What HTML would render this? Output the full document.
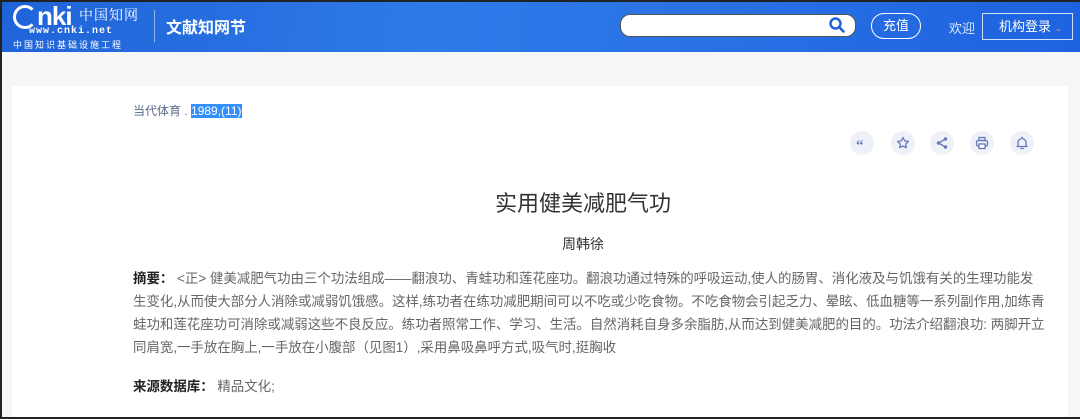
<!DOCTYPE html>
<html><head><meta charset="utf-8">
<style>
*{margin:0;padding:0;box-sizing:border-box}
html,body{width:1080px;height:419px;overflow:hidden}
body{background:#f5f6f8;font-family:"Liberation Sans","Noto Sans CJK SC",sans-serif;position:relative}
div{white-space:nowrap}
.hdr{position:absolute;left:0;top:0;width:1080px;height:52px;background:linear-gradient(100deg,#1f63d8 0%,#2e7ae8 40%,#2a74e6 60%,#1e62df 100%)}
.logo{position:absolute;left:13px;top:4px;color:#fff;width:130px;height:44px}
.card{position:absolute;left:12px;top:86px;width:1056px;height:340px;background:#fff}
.ic{position:absolute;top:131px;width:24px;height:24px;border-radius:50%;background:#eef1f8}
.ic svg{position:absolute;left:5px;top:5px}
.p{position:absolute;left:133px;font-size:13.45px;color:#666;line-height:23px}
b{color:#222}
</style></head><body>
<div class="hdr">
 <div class="logo">
  <div style="position:absolute;left:0;top:1px;width:24px;height:24px;border-radius:50%;border:3px solid #fff;border-right-color:transparent"></div>
  <div style="position:absolute;left:24px;top:-3px;font:bold 26px 'Liberation Sans';letter-spacing:-1px">nki</div>
  <div style="position:absolute;left:66px;top:1px;font-size:14px;font-family:'Noto Serif CJK SC',serif;letter-spacing:1px">中国知网</div>
  <div style="position:absolute;left:16px;top:22px;font:bold 10px 'Liberation Mono';letter-spacing:1px">www.cnki.net</div>
  <div style="position:absolute;left:0;top:34px;font-size:9px;letter-spacing:2px">中国知识基础设施工程</div>
 </div>
 <div style="position:absolute;left:154px;top:10px;width:1px;height:32px;background:rgba(255,255,255,.5)"></div>
 <div style="position:absolute;left:166px;top:14px;font-size:16px;font-weight:bold;color:#fff">文献知网节</div>
 <div style="position:absolute;left:620px;top:14px;width:236px;height:23px;border-radius:10px;background:#fff;border:1px solid #555"></div>
 <svg style="position:absolute;left:828px;top:16px" width="18" height="18" viewBox="0 0 18 18"><circle cx="7.5" cy="7.5" r="5" fill="none" stroke="#1f5fd6" stroke-width="2.4"/><path d="M11 11l4.5 4.5" stroke="#1f5fd6" stroke-width="2.6" stroke-linecap="round"/></svg>
 <div style="position:absolute;left:871px;top:13px;width:50px;height:26px;border:1.5px solid #fff;border-radius:13px;color:#fff;font-size:13px;text-align:center;line-height:23px">充值</div>
 <div style="position:absolute;left:949px;top:18px;color:#dce8fb;font-size:13px">欢迎</div>
 <div style="position:absolute;left:982px;top:13px;width:91px;height:27px;border:1px solid #cfe0fb;color:#fff;font-size:13px;line-height:25px;padding-left:16px">机构登录 <span style="color:#f0a040;font-size:9px">&#8964;</span></div>
</div>
<div class="card"></div>
<div style="position:absolute;left:0;top:0;width:1080px;height:2px;background:#222"></div>
<div style="position:absolute;left:0;top:0;width:2px;height:419px;background:#222"></div>
<div style="position:absolute;left:0;top:417px;width:1080px;height:2px;background:#222"></div>
<div style="position:absolute;left:133px;top:102px;font-size:12px;color:#5a6a8a">当代体育 . <span style="background:#3390ff;color:#fff">1989,(11)</span></div>
<div class="ic" style="left:850px"><svg width="14" height="14" viewBox="0 0 14 14"><text x="1" y="14" font-size="15" font-weight="bold" fill="#6778b8" font-family="Liberation Serif">&#8220;</text></svg></div>
<div class="ic" style="left:891px"><svg width="14" height="14" viewBox="0 0 14 14"><path d="M7 1.5l1.7 3.4 3.7.5-2.7 2.6.6 3.7L7 10l-3.3 1.7.6-3.7L1.6 5.4l3.7-.5z" fill="none" stroke="#6778b8" stroke-width="1.3" stroke-linejoin="round"/></svg></div>
<div class="ic" style="left:930px"><svg width="14" height="14" viewBox="0 0 14 14"><circle cx="10.5" cy="3" r="1.7" fill="#6778b8"/><circle cx="3.5" cy="7" r="1.7" fill="#6778b8"/><circle cx="10.5" cy="11" r="1.7" fill="#6778b8"/><path d="M10.5 3L3.5 7l7 4" stroke="#6778b8" stroke-width="1.3" fill="none"/></svg></div>
<div class="ic" style="left:970px"><svg width="14" height="14" viewBox="0 0 14 14"><rect x="4" y="1.5" width="6" height="3" fill="none" stroke="#6778b8" stroke-width="1.3"/><rect x="1.5" y="4.5" width="11" height="5.5" rx="1.5" fill="none" stroke="#6778b8" stroke-width="1.3"/><rect x="4" y="8" width="6" height="4.5" fill="#fff" stroke="#6778b8" stroke-width="1.3"/></svg></div>
<div class="ic" style="left:1010px"><svg width="14" height="14" viewBox="0 0 14 14"><path d="M3 10.5V6.5a4 4 0 018 0v4zM2 10.5h10M5.8 12.5h2.4M7 1.2v1.3" stroke="#6778b8" stroke-width="1.3" fill="none" stroke-linecap="round"/></svg></div>
<div style="position:absolute;left:483px;width:200px;top:186px;text-align:center;font-size:22px;color:#333">实用健美减肥气功</div>
<div style="position:absolute;left:483px;width:200px;top:234px;text-align:center;font-size:14px;color:#333">周韩徐</div>
<div class="p" style="top:267px"><b>摘要：</b> &lt;正&gt; 健美减肥气功由三个功法组成——翻浪功、青蛙功和莲花座功。翻浪功通过特殊的呼吸运动,使人的肠胃、消化液及与饥饿有关的生理功能发</div>
<div class="p" style="top:290px">生变化,从而使大部分人消除或减弱饥饿感。这样,练功者在练功减肥期间可以不吃或少吃食物。不吃食物会引起乏力、晕眩、低血糖等一系列副作用,加练青</div>
<div class="p" style="top:313px">蛙功和莲花座功可消除或减弱这些不良反应。练功者照常工作、学习、生活。自然消耗自身多余脂肪,从而达到健美减肥的目的。功法介绍翻浪功: 两脚开立</div>
<div class="p" style="top:336px">同肩宽,一手放在胸上,一手放在小腹部（见图1）,采用鼻吸鼻呼方式,吸气时,挺胸收</div>
<div class="p" style="top:375px"><b>来源数据库：</b> 精品文化;</div>
</body></html>
